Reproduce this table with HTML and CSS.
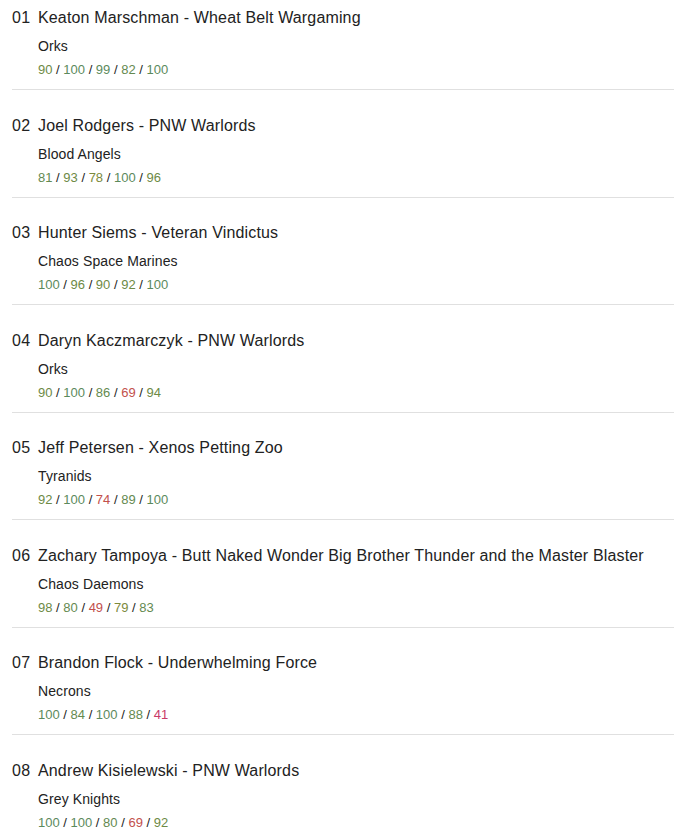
FILE: index.html
```html
<!DOCTYPE html>
<html lang="en">
<head>
<meta charset="utf-8">
<title>Standings</title>
<link rel="stylesheet" href="styles.css">
</head>
<body>
<ol class="standings">
  <li class="entry">
    <div class="title"><span class="rank">01</span><span class="name">Keaton Marschman - Wheat Belt Wargaming</span></div>
    <div class="faction">Orks</div>
    <div class="scores"><span class="s-a">90</span> / <span class="s-h">100</span> / <span class="s-h">99</span> / <span class="s-b">82</span> / <span class="s-h">100</span></div>
  </li>
  <li class="entry">
    <div class="title"><span class="rank">02</span><span class="name">Joel Rodgers - PNW Warlords</span></div>
    <div class="faction">Blood Angels</div>
    <div class="scores"><span class="s-b">81</span> / <span class="s-a">93</span> / <span class="s-c">78</span> / <span class="s-h">100</span> / <span class="s-a">96</span></div>
  </li>
  <li class="entry">
    <div class="title"><span class="rank">03</span><span class="name">Hunter Siems - Veteran Vindictus</span></div>
    <div class="faction">Chaos Space Marines</div>
    <div class="scores"><span class="s-h">100</span> / <span class="s-a">96</span> / <span class="s-a">90</span> / <span class="s-a">92</span> / <span class="s-h">100</span></div>
  </li>
  <li class="entry">
    <div class="title"><span class="rank">04</span><span class="name">Daryn Kaczmarczyk - PNW Warlords</span></div>
    <div class="faction">Orks</div>
    <div class="scores"><span class="s-a">90</span> / <span class="s-h">100</span> / <span class="s-b">86</span> / <span class="s-r">69</span> / <span class="s-a">94</span></div>
  </li>
  <li class="entry">
    <div class="title"><span class="rank">05</span><span class="name">Jeff Petersen - Xenos Petting Zoo</span></div>
    <div class="faction">Tyranids</div>
    <div class="scores"><span class="s-a">92</span> / <span class="s-h">100</span> / <span class="s-r">74</span> / <span class="s-b">89</span> / <span class="s-h">100</span></div>
  </li>
  <li class="entry">
    <div class="title"><span class="rank">06</span><span class="name">Zachary Tampoya - Butt Naked Wonder Big Brother Thunder and the Master Blaster</span></div>
    <div class="faction">Chaos Daemons</div>
    <div class="scores"><span class="s-a">98</span> / <span class="s-b">80</span> / <span class="s-r">49</span> / <span class="s-c">79</span> / <span class="s-b">83</span></div>
  </li>
  <li class="entry">
    <div class="title"><span class="rank">07</span><span class="name">Brandon Flock - Underwhelming Force</span></div>
    <div class="faction">Necrons</div>
    <div class="scores"><span class="s-h">100</span> / <span class="s-b">84</span> / <span class="s-h">100</span> / <span class="s-b">88</span> / <span class="s-x">41</span></div>
  </li>
  <li class="entry">
    <div class="title"><span class="rank">08</span><span class="name">Andrew Kisielewski - PNW Warlords</span></div>
    <div class="faction">Grey Knights</div>
    <div class="scores"><span class="s-h">100</span> / <span class="s-h">100</span> / <span class="s-b">80</span> / <span class="s-r">69</span> / <span class="s-a">92</span></div>
  </li>
</ol>
</body>
</html>
```
FILE: styles.css
```css
html, body {
  margin: 0;
  padding: 0;
  background: #fff;
}
body {
  font-family: "Liberation Sans", Arial, sans-serif;
  color: #222;
}
.standings {
  list-style: none;
  margin: 0;
  padding: 8px 0 0 12px;
}
.entry {
  border-bottom: 1px solid #e0e0e0;
  padding-bottom: 10px;
  margin-bottom: 26px;
}
.entry:nth-child(even) {
  margin-bottom: 25px;
}
.title {
  display: flex;
  font-size: 16px;
  line-height: 20px;
  letter-spacing: 0.15px;
  color: #222;
  white-space: nowrap;
}
.rank {
  width: 26px;
  letter-spacing: 0.3px;
  color: #222;
}
.faction {
  margin: 8px 0 0 26px;
  font-size: 14px;
  line-height: 20px;
  letter-spacing: 0.1px;
  color: #222;
}
.scores {
  margin: 4px 0 0 26px;
  font-size: 13px;
  line-height: 19px;
  color: #222;
}
.s-h { color: #5b8a5c; }
.s-a { color: #6d8a45; }
.s-b { color: #648a50; }
.s-c { color: #7c8a3c; }
.s-r { color: #c2504c; }
.s-x { color: #c83a68; }
```
